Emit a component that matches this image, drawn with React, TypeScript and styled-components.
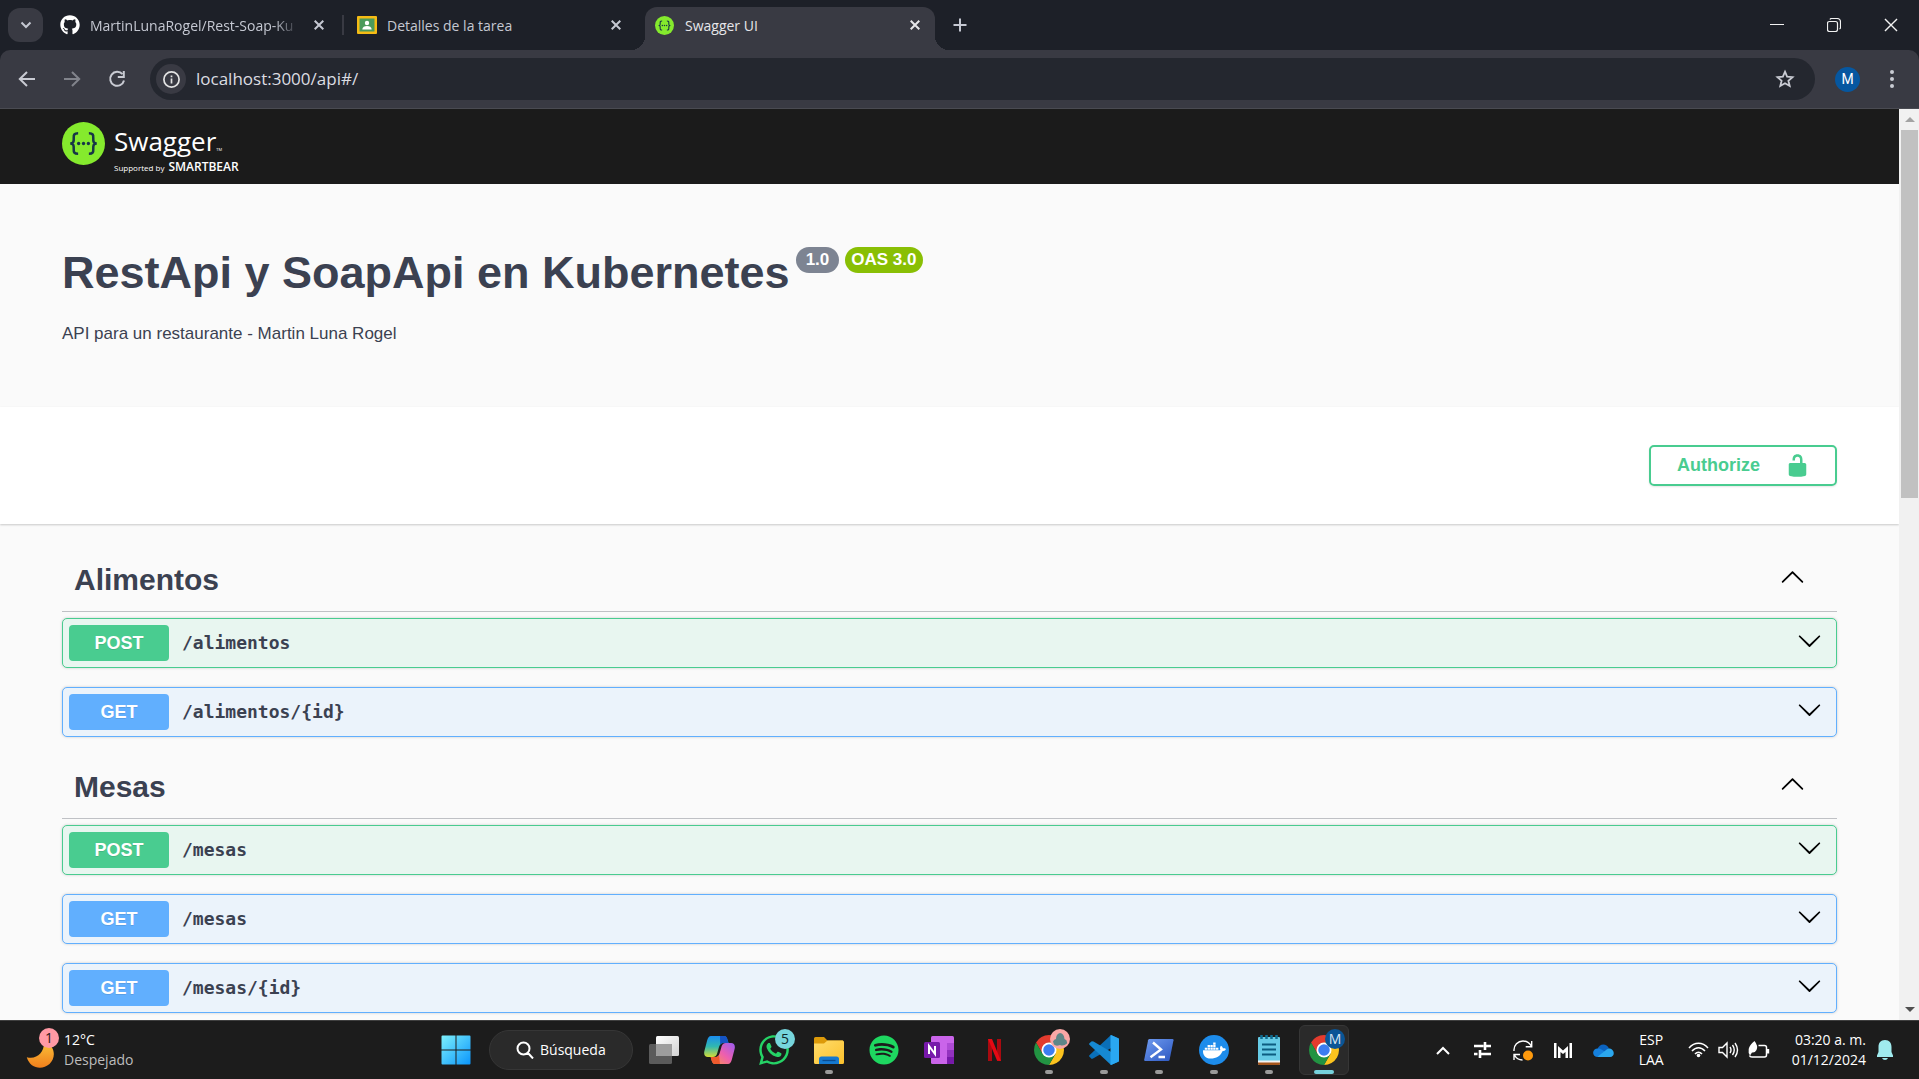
import React, { useState } from "react";
import styled, { createGlobalStyle } from "styled-components";
import { FaDocker, FaGithub, FaSpotify, FaWhatsapp } from "react-icons/fa";

const uiFont = `"Open Sans", "Noto Sans", sans-serif`;
const pageFont = `"Liberation Sans", Arial, sans-serif`;

const GlobalStyle = createGlobalStyle`
  *, *::before, *::after { box-sizing: border-box; }
  html, body, #root { height: 100%; margin: 0; }
  body { background: #1c1c1c; font-family: ${uiFont}; overflow: hidden; }
  button { border: 0; padding: 0; margin: 0; background: none; color: inherit; font: inherit; cursor: pointer; }
  svg { display: block; flex: none; }
  h2, h3, p { margin: 0; }
`;

const Screen = styled.div`
  display: flex;
  flex-direction: column;
  height: 100vh;
`;

/* ---------- Browser chrome ---------- */

const TabStrip = styled.div`
  display: flex;
  align-items: center;
  height: 50px;
  padding-left: 8px;
  background: #1d2028;
  color: #c5c8d2;
`;

const TabSearch = styled.button`
  display: grid;
  place-items: center;
  width: 35px;
  height: 34px;
  border-radius: 12px;
  background: #393a43;
`;

const TabList = styled.div`
  display: flex;
  align-self: stretch;
  padding-left: 4px;
`;

const Tab = styled.div<{ $active?: boolean }>`
  position: relative;
  display: flex;
  align-items: center;
  gap: ${(p) => (p.$active ? 11 : 10)}px;
  width: ${(p) => (p.$active ? 290 : 295)}px;
  margin: 7px 0 0 ${(p) => (p.$active ? 6 : 0)}px;
  padding: 0 ${(p) => (p.$active ? 10 : 13)}px 7px ${(p) => (p.$active ? 10 : 13)}px;
  border-radius: 12px 12px 0 0;
  background: ${(p) => (p.$active ? "#393a43" : "transparent")};
  color: ${(p) => (p.$active ? "#e6e6ea" : "#c5c8d2")};

  &::before,
  &::after {
    content: "";
    display: ${(p) => (p.$active ? "block" : "none")};
    position: absolute;
    bottom: 0;
    width: 14px;
    height: 14px;
  }
  &::before {
    right: 100%;
    background: radial-gradient(circle at 0 0, transparent 14px, #393a43 14px);
  }
  &::after {
    left: 100%;
    background: radial-gradient(circle at 100% 0, transparent 14px, #393a43 14px);
  }
`;

const TabTitle = styled.span<{ $faded?: boolean }>`
  flex: 1;
  min-width: 0;
  padding-top: 2px;
  overflow: hidden;
  white-space: nowrap;
  font-size: 14px;
  line-height: 20px;
  mask-image: ${(p) => (p.$faded ? "linear-gradient(90deg, #000 88%, transparent)" : "none")};
`;

const TabSeparator = styled.span`
  align-self: center;
  width: 2px;
  height: 20px;
  background: #393a43;
`;

const IconButton = styled.button<{ $size?: number }>`
  display: grid;
  place-items: center;
  flex: none;
  width: ${(p) => p.$size ?? 20}px;
  height: ${(p) => p.$size ?? 20}px;
`;

const NewTab = styled(IconButton)`
  margin-left: 10px;
`;

const WindowControls = styled.div`
  display: flex;
  margin-left: auto;
  color: #f2f2f2;
`;

const WindowButton = styled(IconButton)`
  width: 57px;
  height: 49px;
`;

const Toolbar = styled.div`
  display: flex;
  align-items: center;
  height: 59px;
  padding: 0 17px 0 12px;
  border-bottom: 1px solid #4a4b52;
  border-radius: 10px 10px 0 0;
  background: #393a43;
  color: #c9cbd3;
`;

const ToolbarBackdrop = styled.div`
  background: #1d2028;
`;

const NavButtons = styled.div`
  display: flex;
  gap: 15px;
  padding-right: 18px;
`;

const AddressBar = styled.div`
  display: flex;
  align-items: center;
  flex: 1;
  height: 42px;
  padding: 0 15px 0 6px;
  border-radius: 21px;
  background: #24272f;
`;

const SiteInfo = styled(IconButton)`
  border-radius: 50%;
  background: #393a43;
  color: #e3e3e3;
`;

const AddressInput = styled.input`
  flex: 1;
  min-width: 0;
  padding: 0;
  margin: 0 10px;
  border: 0;
  outline: 0;
  background: transparent;
  color: #dcdde2;
  font: 17px/24px ${uiFont};
`;

const Profile = styled.button`
  width: 25px;
  height: 25px;
  margin: 0 22px 0 20px;
  border-radius: 50%;
  background: #0657a0;
  color: #fff;
  font: 14px/25px Roboto, sans-serif;
`;

/* ---------- Page viewport ---------- */

const Viewport = styled.div`
  display: flex;
  flex: 1;
  min-height: 0;
  background: #fafafa;
`;

const Page = styled.main`
  flex: 1;
  min-width: 0;
  overflow: hidden;
  color: #3b4151;
  font-family: ${pageFont};
`;

const Wrapper = styled.div`
  max-width: 1825px;
  margin: 0 auto;
  padding: 0 25px;
`;

const TopBar = styled.header`
  background: #1b1b1b;
`;

const Brand = styled.a`
  display: flex;
  width: max-content;
  gap: 9px;
  height: 75px;
  padding-top: 13px;
  color: #fff;
  text-decoration: none;
  font-family: ${uiFont};
`;

const BrandText = styled.span`
  display: flex;
  flex-direction: column;
`;

const BrandName = styled.span`
  font-size: 26px;
  line-height: 39px;
`;

const Trademark = styled.sup`
  font-size: 4px;
  line-height: 4px;
  vertical-align: baseline;
`;

const BrandOwner = styled.span`
  display: flex;
  align-items: baseline;
  gap: 4px;
  font-size: 8px;
  line-height: 12px;
`;

const OwnerName = styled.strong`
  font-size: 12px;
  font-weight: 600;
`;

const Info = styled.section`
  padding: 62px 0;
`;

const TitleRow = styled.div`
  display: flex;
  align-items: flex-start;
`;

const Title = styled.h2`
  margin-right: 6px;
  font-size: 45px;
  line-height: 54px;
`;

const Pill = styled.span<{ $color: string; $pad: number }>`
  margin: 1px 6px 0 0;
  padding: 0 ${(p) => p.$pad}px;
  border-radius: 13px;
  background: ${(p) => p.$color};
  color: #fff;
  font-size: 17px;
  font-weight: 700;
  line-height: 26px;
  height: 26px;
`;

const Description = styled.p`
  margin-top: 23px;
  font-size: 17px;
  line-height: 22px;
`;

const SchemeBar = styled.section`
  padding: 38px 0;
  background: #fff;
  box-shadow: 0 1px 2px rgba(0, 0, 0, 0.2);
`;

const SchemeRow = styled(Wrapper)`
  display: flex;
  justify-content: flex-end;
`;

const Authorize = styled.button`
  display: flex;
  align-items: center;
  gap: 25px;
  height: 41px;
  padding: 0 25px 0 26px;
  border: 2px solid #49cc90;
  border-radius: 5px;
  box-shadow: 0 1px 2px rgba(0, 0, 0, 0.1);
  color: #49cc90;
  font-size: 18px;
  font-weight: 700;
`;

const TagList = styled(Wrapper)`
  padding-top: 25px;
`;

const TagSection = styled.section`
  margin-bottom: 19px;
`;

const TagHeading = styled.h3`
  border-bottom: 1px solid #bfc1c5;
  font-size: 30px;
`;

const TagToggle = styled.button`
  display: flex;
  align-items: center;
  justify-content: space-between;
  width: 100%;
  height: 62px;
  padding: 0 32px 0 12px;
  text-align: left;
  font-weight: 700;
`;

const ArrowBox = styled.span`
  padding-bottom: 5px;
  color: #000;
`;

const Operations = styled.div`
  display: flex;
  flex-direction: column;
  gap: 19px;
  padding-top: 6px;
`;

const methodColors = {
  POST: { solid: "#49cc90", tint: "#e8f6f0" },
  GET: { solid: "#61affe", tint: "#ebf3fb" },
};
type Method = keyof typeof methodColors;

const Operation = styled.button<{ $method: Method }>`
  display: flex;
  align-items: center;
  width: 100%;
  height: 50px;
  padding: 0 14px 0 6px;
  border: 1px solid ${(p) => methodColors[p.$method].solid};
  border-radius: 5px;
  background: ${(p) => methodColors[p.$method].tint};
  box-shadow: 0 0 3px rgba(0, 0, 0, 0.19);
  text-align: left;
`;

const MethodBadge = styled.span<{ $method: Method }>`
  width: 100px;
  height: 36px;
  border-radius: 4px;
  background: ${(p) => methodColors[p.$method].solid};
  color: #fff;
  text-align: center;
  text-shadow: 0 1px 0 rgba(0, 0, 0, 0.1);
  font-size: 18px;
  font-weight: 700;
  line-height: 36px;
`;

const Path = styled.span`
  flex: 1;
  padding-left: 13px;
  font: 700 18px/24px "DejaVu Sans Mono", monospace;
`;

const ScrollTrack = styled.div`
  display: flex;
  flex-direction: column;
  width: 20px;
  padding: 0 1px 0 2px;
  background: #f1f1f1;
`;

const ScrollBody = styled.div`
  flex: 1;
`;

const ScrollThumb = styled.div`
  height: 42.4%;
  background: #c1c1c1;
`;

const ScrollArrow = styled.span`
  display: grid;
  place-items: center;
  height: 21px;
`;

/* ---------- Taskbar ---------- */

const Taskbar = styled.footer`
  display: flex;
  align-items: center;
  height: 59px;
  border-top: 1px solid #3f3f3f;
  background: #1c1c1c;
  color: #fff;
  font-size: 14px;
  line-height: 20px;
`;

const Weather = styled.button`
  display: flex;
  align-items: center;
  flex: 1;
  gap: 5px;
  padding-left: 26px;
  text-align: left;
`;

const Dim = styled.span`
  color: #bdbdbd;
`;

const Stack = styled.span<{ $align?: string }>`
  display: flex;
  flex-direction: column;
  text-align: ${(p) => p.$align ?? "left"};
  white-space: nowrap;
`;

const Apps = styled.nav`
  display: flex;
  align-items: center;
  gap: 5px;
`;

const AppTile = styled.button<{ $active?: boolean }>`
  position: relative;
  display: grid;
  place-items: center;
  width: 50px;
  height: 50px;
  border: 1px solid ${(p) => (p.$active ? "#363636" : "transparent")};
  border-radius: 6px;
  background: ${(p) => (p.$active ? "#2a2a2a" : "transparent")};
`;

const RunMark = styled.span<{ $active?: boolean }>`
  position: absolute;
  bottom: 0;
  left: 50%;
  width: ${(p) => (p.$active ? 20 : 8)}px;
  height: 4px;
  border-radius: 2px;
  background: ${(p) => (p.$active ? "#76d1dc" : "#9a9a9a")};
  transform: translateX(-50%);
`;

const CountBadge = styled.span<{ $bg: string; $fg: string }>`
  position: absolute;
  top: 3px;
  right: 3px;
  display: grid;
  place-items: center;
  width: 20px;
  height: 20px;
  border-radius: 50%;
  background: ${(p) => p.$bg};
  color: ${(p) => p.$fg};
  font-size: 14px;
  line-height: 20px;
`;

const WeatherIcon = styled.span`
  position: relative;
  width: 33px;
  height: 44px;
  padding-top: 12px;

  ${CountBadge} {
    top: 0;
    right: 0;
  }
`;

const SearchBox = styled.button`
  display: flex;
  align-items: center;
  gap: 6px;
  width: 144px;
  height: 40px;
  padding-left: 26px;
  margin: 0 1px 0 3px;
  border: 1px solid #363636;
  border-radius: 20px;
  background: #2a2a2a;
  color: #fff;
`;

const Tray = styled.div`
  display: flex;
  align-items: center;
  justify-content: flex-end;
  flex: none;
  width: 570px;
  padding-right: 24px;
`;

const TrayIcons = styled.div`
  display: flex;
  align-items: center;
  gap: 20px;
`;

const TrayStatus = styled.button`
  display: flex;
  align-items: center;
  gap: 9px;
  margin: 0 22px 0 24px;
`;

const Language = styled.button`
  margin-left: 26px;
`;

const Bell = styled(IconButton)`
  margin-left: 9px;
`;

/* ---------- Icons ---------- */

const Cross = ({ size = 10, width = 2 }: { size?: number; width?: number }) => (
  <svg width={size} height={size} viewBox="0 0 10 10" stroke="currentColor" strokeWidth={width} fill="none">
    <path d="M.7.7 9.3 9.3M9.3.7.7 9.3" />
  </svg>
);

const SwaggerMark = ({ size }: { size: number }) => (
  <svg width={size} height={size} viewBox="0 0 44 44">
    <circle cx="22" cy="22" r="22" fill="#85ea2d" />
    <g fill="none" stroke="#173647" strokeWidth="2.6">
      <path d="M16.5 11.5c-4 0-4.700 1.300-4.500 5 .2 3.700-.3 5.500-3.600 5.500 3.300 0 3.800 1.800 3.600 5.500-.2 3.700.500 5 4.500 5" />
      <path d="M27.500 11.500c4 0 4.700 1.300 4.500 5-.2 3.700.3 5.500 3.600 5.500-3.300 0-3.800 1.800-3.600 5.500.2 3.700-.5 5-4.500 5" />
    </g>
    <g fill="#173647">
      <circle cx="17" cy="22" r="1.700" />
      <circle cx="22" cy="22" r="1.700" />
      <circle cx="27" cy="22" r="1.700" />
    </g>
  </svg>
);

const ClassroomIcon = () => (
  <svg width="20" height="20" viewBox="0 0 20 20">
    <rect y="1" width="20" height="18" rx="1" fill="#f5bb14" />
    <rect x="2.500" y="3.500" width="15" height="13" fill="#4b9a5b" />
    <circle cx="10" cy="8" r="2.200" fill="#fff" />
    <path d="M5.300 14.500c0-4.600 9.400-4.600 9.400 0z" fill="#fff" />
  </svg>
);

const Arrow = ({ flip }: { flip?: boolean }) => (
  <svg width="20" height="20" viewBox="0 0 20 20" fill="none" stroke="currentColor" strokeWidth="2">
    <path d={flip ? "M2 10h15M10 3l7.200 7-7.200 7" : "M18 10H3M10 3 2.800 10l7.200 7"} />
  </svg>
);

const ReloadIcon = () => (
  <svg width="20" height="20" viewBox="0 0 20 20" fill="none" stroke="currentColor" strokeWidth="2">
    <path d="M15.500 5.200A7 7 0 1 0 17 11.500" />
    <path d="M16.800 2v6h-6" />
  </svg>
);

const SectionArrow = ({ open }: { open?: boolean }) => (
  <svg width="25" height="25" viewBox="0 0 20 20" fill="currentColor">
    {open ? (
      <path d="M17.418 14.908c.272.268.709.268.979 0s.271-.701 0-.969l-7.908-7.830c-.27-.268-.707-.268-.979 0l-7.908 7.830c-.27.268-.27.701 0 .969.271.268.709.268.979 0L10 7.767z" transform="translate(0 -1)" />
    ) : (
      <path d="M17.418 6.109c.272-.268.709-.268.979 0s.271.701 0 .969l-7.908 7.830c-.27.268-.707.268-.979 0l-7.908-7.830c-.27-.268-.27-.701 0-.969.271-.268.709-.268.979 0L10 13.250z" />
    )}
  </svg>
);

const UnlockIcon = () => (
  <svg width="25" height="25" viewBox="0 0 20 20" fill="currentColor">
    <path d="M15.800 8H14V5.600C14 2.703 12.665 1 10 1 7.334 1 6 2.703 6 5.600V6h2v-.801C8 3.754 8.797 3 10 3c1.203 0 2 .754 2 2.199V8H4c-.553 0-1 .646-1 1.199V17c0 .549.428 1.139.951 1.307l1.197.387C5.672 18.861 6.550 19 7.100 19h5.800c.549 0 1.428-.139 1.951-.307l1.196-.387c.524-.167.953-.757.953-1.306V9.199C17 8.646 16.352 8 15.800 8z" />
  </svg>
);

const StartIcon = () => (
  <svg width="30" height="30" viewBox="0 0 30 30">
    <defs>
      <linearGradient id="start" x1="0" y1="0" x2="1" y2="1" gradientUnits="objectBoundingBox">
        <stop offset="0" stopColor="#7df0fb" />
        <stop offset="1" stopColor="#0a95fb" />
      </linearGradient>
    </defs>
    <path fill="url(#start)" d="M1.500.500H14.500V14.500H.500V1.500q0-1 1-1zM15.500.500H28.500q1 0 1 1V14.500h-14zM.500 15.500h14v14h-13q-1 0-1-1zM15.500 15.500h14v13q0 1-1 1h-13z" />
  </svg>
);

const TaskViewIcon = () => (
  <svg width="30" height="28" viewBox="0 0 30 28">
    <defs>
      <linearGradient id="tvFront" x1="0" y1="0" x2="1" y2="1">
        <stop offset="0" stopColor="#fff" />
        <stop offset="1" stopColor="#d2d2d2" />
      </linearGradient>
    </defs>
    <rect y="8" width="23" height="20" rx="1.500" fill="#5b5b5b" />
    <rect x="7" width="23" height="20" rx="1.500" fill="url(#tvFront)" />
    <path d="M7 8h16v12H8.500A1.500 1.500 0 0 1 7 18.500z" fill="#9d9d9d" />
  </svg>
);

const CopilotIcon = () => (
  <svg width="31" height="28" viewBox="0 0 31 28">
    <defs>
      <linearGradient id="cpA" x1="0" y1="0" x2="0" y2="1">
        <stop offset="0" stopColor="#1a8df0" />
        <stop offset=".5" stopColor="#31b8b0" />
        <stop offset="1" stopColor="#d4dc35" />
      </linearGradient>
      <linearGradient id="cpB" x1="1" y1="0" x2="0" y2="1">
        <stop offset="0" stopColor="#9a5cf2" />
        <stop offset=".5" stopColor="#ee5fae" />
        <stop offset="1" stopColor="#fb9a49" />
      </linearGradient>
    </defs>
    <path d="M7 0h13c2 0 3 2 3.500 4l1 3h-5c-3 0-4 2-4.800 5l-1.700 6c-.8 2-2 3-4 3H4c-3 0-4.500-2-3.600-6L3 5c.9-3.300 2-5 4-5z" fill="url(#cpA)" />
    <path d="M16 0h4.500c2 0 2.700 2 3.200 4l.9 3h-5c-1.500 0-2.600.5-3.400 2z" fill="#1554c4" />
    <path d="M24 28H11c-2 0-3-2-3.500-4l-.8-3h4.500c3 0 4-2 4.800-5l1.700-6c.8-2 2-3 4-3H27c3 0 4.500 2 3.600 6L28 23c-.9 3.300-2 5-4 5z" fill="url(#cpB)" />
    <path d="M16 28h-5c-2 0-3-2-3.500-4l-.8-3h4.500c2 0 3-.500 3.800-2z" fill="#ee5a2d" />
  </svg>
);

const FolderIcon = () => (
  <svg width="30" height="27" viewBox="0 0 30 27">
    <defs>
      <linearGradient id="folder" x1="0" y1="0" x2="1" y2="1">
        <stop offset="0" stopColor="#ffdc6b" />
        <stop offset="1" stopColor="#fcc12c" />
      </linearGradient>
    </defs>
    <path d="M0 1.500Q0 0 1.500 0h8.500l3.500 3.500H29V10H0z" fill="#dd9a09" />
    <path d="M0 6.500h10L13.500 3.500h15Q30 3.500 30 5v20.500q0 1.500-1.500 1.500h-27Q0 27 0 25.500z" fill="url(#folder)" />
    <path d="M5 27v-5q0-2.500 2.500-2.500h15Q25 19.500 25 22v5z" fill="#1679cf" />
    <path d="M8.500 23.500h13" stroke="#0a4c91" strokeWidth="1.300" />
  </svg>
);

const OneNoteIcon = () => (
  <svg width="30" height="28" viewBox="0 0 30 28">
    <rect x="7" width="23" height="28" rx="1.500" fill="#ca64ea" />
    <path d="M23 7h7v7h-7z" fill="#ae4bd5" />
    <path d="M23 14h7v7h-7z" fill="#9332bf" />
    <path d="M23 21h7v5.500q0 1.500-1.500 1.500H23z" fill="#7719aa" />
    <rect y="6" width="16" height="16" rx="1.500" fill="#7719aa" />
    <path d="M5 18V10l6 8v-8" fill="none" stroke="#fff" strokeWidth="2" />
  </svg>
);

const NetflixIcon = () => (
  <svg width="13" height="22" viewBox="0 0 13 22">
    <path d="M0 0h4v22l-4 .2zM9 0h4v22.200L9 22z" fill="#a90a10" />
    <path d="M0 0h4l9 22-4-.4z" fill="#e50914" />
  </svg>
);

const ChromeIcon = () => (
  <svg width="30" height="30" viewBox="0 0 48 48">
    <path d="M3.220 12A24 24 0 0 1 44.780 12H24L13.600 30z" fill="#e33b2e" />
    <path d="M44.780 12A24 24 0 0 1 24 48l10.390-18L24 12z" fill="#fcc31e" />
    <path d="M24 48A24 24 0 0 1 3.220 12L13.600 30h20.790z" fill="#229342" />
    <circle cx="24" cy="24" r="12" fill="#fff" />
    <circle cx="24" cy="24" r="9.200" fill="#3d7df0" />
  </svg>
);

const CodeIcon = () => (
  <svg width="30" height="30" viewBox="0 0 30 30">
    <path d="M22 0 29 3.300V9L4.500 23.300 2.800 24 .400 21.800q-.6-.8 0-1.500z" fill="#0a6fb8" />
    <path d="M.400 8.200 2.800 6.200 4.500 6.500 29 21v5.700L22 30 .400 9.800q-.6-.8 0-1.600z" fill="#1689d2" />
    <path d="M22 0l8 3.600v22.800L22 30q-.8-.3-.500-1.500V1.500Q21.200.300 22 0z" fill="#2aa8f2" />
  </svg>
);

const PowerShellIcon = () => (
  <svg width="30" height="22" viewBox="0 0 30 22">
    <defs>
      <linearGradient id="ps" x1="0" y1="0" x2="1" y2="1">
        <stop offset="0" stopColor="#6f9bf0" />
        <stop offset="1" stopColor="#2c57c0" />
      </linearGradient>
    </defs>
    <path d="M5.500 0H28.500q1.200 0 1 1.200L25.600 20.800q-.3 1.200-1.400 1.200H1.200q-1.200 0-1-1.200L4.100 1.200Q4.400 0 5.500 0z" fill="url(#ps)" />
    <path d="M9 3.500 17 10.500 6.500 18.300M14.500 18h6.500" fill="none" stroke="#fff" strokeWidth="2.400" />
  </svg>
);

const DockerDisc = styled.span`
  display: grid;
  place-items: center;
  width: 30px;
  height: 30px;
  border-radius: 50%;
  background: #1d8ceb;
`;

const NotepadIcon = () => (
  <svg width="22" height="30" viewBox="0 0 22 30">
    <rect y="2" width="22" height="28" rx="1" fill="#66cbe6" />
    <path d="M0 25.500h22V28H0z" fill="#f3f3f3" />
    <path d="M0 27.500h22V29q0 1-1 1H1q-1 0-1-1z" fill="#a4551c" />
    <path d="M4 9.500h14M4 14.500h14M4 19.500h14" stroke="#0c5d80" strokeWidth="2" />
    <path d="M3.500 0v4M8.500 0v4M13.500 0v4M18.500 0v4" stroke="#0f6d92" strokeWidth="2.500" />
  </svg>
);

const MoonIcon = () => (
  <svg width="28" height="28" viewBox="0 0 28 28">
    <defs>
      <linearGradient id="moon" x1="0" y1="0" x2="0" y2="1">
        <stop offset="0" stopColor="#fbc43a" />
        <stop offset="1" stopColor="#f07f1c" />
      </linearGradient>
    </defs>
    <path d="M18 1C30 6 30 18 23.500 24 16 30.500 4 28.500.800 17.200 11 20 19 12 18 1z" fill="url(#moon)" />
  </svg>
);

const SyncIcon = () => (
  <svg width="20" height="21" viewBox="0 0 20 21" fill="none" stroke="#fff" strokeWidth="1.400">
    <path d="M1 11C.500 5 5 1 10 1c4 0 7 2.500 8.500 5.500M18.700 1v5.700h-6M1 20v-5.500h6M1.500 15c1.500 3 4.500 5 8 5" />
    <circle cx="15" cy="15.500" r="5" fill="#ff9a0d" stroke="none" />
  </svg>
);

const Lines = ({ w, h, d, sw = 1.6 }: { w: number; h: number; d: string; sw?: number }) => (
  <svg width={w} height={h} viewBox={`0 0 ${w} ${h}`} fill="none" stroke="currentColor" strokeWidth={sw}>
    <path d={d} />
  </svg>
);

const CloudIcon = () => (
  <svg width="21" height="13" viewBox="0 0 21 13">
    <path d="M4.500 5C6-.500 13.500-1.500 16 4.500L11 9z" fill="#0b63c0" />
    <path d="M5 13C-1.500 13-1.500 4.500 5 4.500c3 0 5 2 7 3.500L8 13z" fill="#1580dd" />
    <path d="M4.500 12.700 14 5.200c1-.7 2-1 3-.7 5 1.500 5 8.500 0 8.500H6z" fill="#2ba7ee" />
  </svg>
);

/* ---------- Content ---------- */

const sections: { name: string; operations: [Method, string][] }[] = [
  { name: "Alimentos", operations: [["POST", "/alimentos"], ["GET", "/alimentos/{id}"]] },
  { name: "Mesas", operations: [["POST", "/mesas"], ["GET", "/mesas"], ["GET", "/mesas/{id}"]] },
];

function Tag({ name, operations }: (typeof sections)[number]) {
  const [open, setOpen] = useState(true);
  return (
    <TagSection>
      <TagHeading>
        <TagToggle aria-expanded={open} onClick={() => setOpen(!open)}>
          {name}
          <ArrowBox>
            <SectionArrow open={open} />
          </ArrowBox>
        </TagToggle>
      </TagHeading>
      {open && (
        <Operations>
          {operations.map(([method, path]) => (
            <Operation key={method + path} $method={method}>
              <MethodBadge $method={method}>{method}</MethodBadge>
              <Path>{path}</Path>
              <ArrowBox>
                <SectionArrow />
              </ArrowBox>
            </Operation>
          ))}
        </Operations>
      )}
    </TagSection>
  );
}

type App = { label: string; icon: React.ReactNode; running?: boolean; active?: boolean; badge?: React.ReactNode };

const apps: App[] = [
  { label: "Vista de tareas", icon: <TaskViewIcon /> },
  { label: "Copilot", icon: <CopilotIcon /> },
  {
    label: "WhatsApp",
    icon: <FaWhatsapp size={34} color="#25d366" />,
    badge: <CountBadge $bg="#76d5dc" $fg="#10282b">5</CountBadge>,
  },
  { label: "Explorador", icon: <FolderIcon />, running: true },
  { label: "Spotify", icon: <FaSpotify size={30} color="#1ed760" /> },
  { label: "OneNote", icon: <OneNoteIcon /> },
  { label: "Netflix", icon: <NetflixIcon /> },
  {
    label: "Chrome",
    icon: <ChromeIcon />,
    running: true,
    badge: (
      <CountBadge $bg="#f9a7a6" $fg="#5f8688">
        <svg width="16" height="14" viewBox="0 0 16 14" fill="currentColor">
          <path d="M1 9.500Q2 7 4 7q0-5 4-6 4 .500 4.500 6 3 1 2.500 4.500-3.500 3-7 1.500-4 1.500-6-.5z" />
        </svg>
      </CountBadge>
    ),
  },
  { label: "Visual Studio Code", icon: <CodeIcon />, running: true },
  { label: "PowerShell", icon: <PowerShellIcon />, running: true },
  { label: "Docker", icon: <DockerDisc><FaDocker size={23} color="#fff" /></DockerDisc>, running: true },
  { label: "Bloc de notas", icon: <NotepadIcon />, running: true },
  {
    label: "Chrome M",
    icon: <ChromeIcon />,
    running: true,
    active: true,
    badge: <CountBadge $bg="#0a5596" $fg="#d8e6f2">M</CountBadge>,
  },
];

export default function App() {
  return (
    <Screen>
      <GlobalStyle />
      <TabStrip>
        <TabSearch aria-label="Buscar pestañas">
          <Lines w={12} h={8} sw={2} d="M1.500 1.500 6 6l4.500-4.500" />
        </TabSearch>
        <TabList>
          <Tab>
            <FaGithub size={20} color="#fff" />
            <TabTitle $faded>MartinLunaRogel/Rest-Soap-Ku</TabTitle>
            <IconButton aria-label="Cerrar"><Cross /></IconButton>
          </Tab>
          <TabSeparator />
          <Tab>
            <ClassroomIcon />
            <TabTitle>Detalles de la tarea</TabTitle>
            <IconButton aria-label="Cerrar"><Cross /></IconButton>
          </Tab>
          <Tab $active>
            <SwaggerMark size={19} />
            <TabTitle>Swagger UI</TabTitle>
            <IconButton aria-label="Cerrar"><Cross /></IconButton>
          </Tab>
        </TabList>
        <NewTab $size={30} aria-label="Nueva pestaña">
          <Lines w={14} h={14} sw={2} d="M7 .500v13M.500 7h13" />
        </NewTab>
        <WindowControls>
          <WindowButton aria-label="Minimizar"><Lines w={14} h={2} sw={1} d="M0 .500h14" /></WindowButton>
          <WindowButton aria-label="Restaurar">
            <Lines w={14} h={14} sw={1.2} d="M2.500 3.500h6q2 0 2 2v6q0 2-2 2h-6q-2 0-2-2v-6q0-2 2-2zM3 1.500q.3-1 1.500-1H10q3.500 0 3.500 3.500v5.500q0 1.200-1 1.500" />
          </WindowButton>
          <WindowButton aria-label="Cerrar ventana"><Cross size={14} width={1} /></WindowButton>
        </WindowControls>
      </TabStrip>

      <ToolbarBackdrop>
        <Toolbar>
          <NavButtons>
            <IconButton $size={30} aria-label="Atrás"><Arrow /></IconButton>
            <IconButton $size={30} aria-label="Adelante" disabled style={{ opacity: 0.5 }}><Arrow flip /></IconButton>
            <IconButton $size={30} aria-label="Recargar"><ReloadIcon /></IconButton>
          </NavButtons>
          <AddressBar>
            <SiteInfo $size={30} aria-label="Información del sitio">
              <svg width="17" height="17" viewBox="0 0 17 17" fill="none" stroke="currentColor" strokeWidth="1.700">
                <circle cx="8.500" cy="8.500" r="7.600" />
                <path d="M8.500 7.500v5M8.500 4.500v1.700" />
              </svg>
            </SiteInfo>
            <AddressInput aria-label="Dirección" defaultValue="localhost:3000/api#/" />
            <IconButton $size={30} aria-label="Favorito">
              <svg width="20" height="20" viewBox="0 0 20 20" fill="none" stroke="currentColor" strokeWidth="1.800">
                <path d="m10 2.700 2.100 5 5.400.5-4.100 3.500 1.300 5.300L10 14.200 5.300 17l1.300-5.300L2.500 8.200l5.400-.5z" />
              </svg>
            </IconButton>
          </AddressBar>
          <Profile>M</Profile>
          <IconButton $size={20} aria-label="Menú">
            <svg width="4" height="18" viewBox="0 0 4 18" fill="currentColor">
              <circle cx="2" cy="2" r="2" />
              <circle cx="2" cy="9" r="2" />
              <circle cx="2" cy="16" r="2" />
            </svg>
          </IconButton>
        </Toolbar>
      </ToolbarBackdrop>

      <Viewport>
        <Page>
          <TopBar>
            <Wrapper>
              <Brand href="#/">
                <SwaggerMark size={43} />
                <BrandText>
                  <BrandName>Swagger<Trademark>TM</Trademark></BrandName>
                  <BrandOwner>Supported by <OwnerName>SMARTBEAR</OwnerName></BrandOwner>
                </BrandText>
              </Brand>
            </Wrapper>
          </TopBar>
          <Wrapper>
            <Info>
              <TitleRow>
                <Title>RestApi y SoapApi en Kubernetes</Title>
                <Pill $color="#7d8492" $pad={10}>1.0</Pill>
                <Pill $color="#89bf04" $pad={6}>OAS 3.0</Pill>
              </TitleRow>
              <Description>API para un restaurante - Martin Luna Rogel</Description>
            </Info>
          </Wrapper>
          <SchemeBar>
            <SchemeRow>
              <Authorize>
                Authorize
                <UnlockIcon />
              </Authorize>
            </SchemeRow>
          </SchemeBar>
          <TagList>
            {sections.map((section) => (
              <Tag key={section.name} {...section} />
            ))}
          </TagList>
        </Page>
        <ScrollTrack>
          <ScrollArrow><svg width="10" height="5" viewBox="0 0 10 5"><path d="M5 0l5 5H0z" fill="#a3a3a3" /></svg></ScrollArrow>
          <ScrollBody><ScrollThumb /></ScrollBody>
          <ScrollArrow><svg width="10" height="5" viewBox="0 0 10 5"><path d="M5 5l5-5H0z" fill="#505050" /></svg></ScrollArrow>
        </ScrollTrack>
      </Viewport>

      <Taskbar>
        <Weather>
          <WeatherIcon>
            <MoonIcon />
            <CountBadge $bg="#ff99a4" $fg="#2b1517">1</CountBadge>
          </WeatherIcon>
          <Stack>
            <span>12°C</span>
            <Dim>Despejado</Dim>
          </Stack>
        </Weather>
        <Apps>
          <AppTile aria-label="Inicio"><StartIcon /></AppTile>
          <SearchBox>
            <Lines w={18} h={18} sw={2} d="M13.500 7.500a6 6 0 1 1-12 0 6 6 0 0 1 12 0zM12 12l5 5.500" />
            Búsqueda
          </SearchBox>
          {apps.map((app) => (
            <AppTile key={app.label} aria-label={app.label} $active={app.active}>
              {app.icon}
              {app.badge}
              {app.running && <RunMark $active={app.active} />}
            </AppTile>
          ))}
        </Apps>
        <Tray>
          <TrayIcons>
            <IconButton aria-label="Iconos ocultos"><Lines w={14} h={9} sw={2} d="M1 8l6-6 6 6" /></IconButton>
            <IconButton aria-label="Ajustes">
              <Lines w={17} h={16} sw={2.6} d="M0 4h9.500M12 4h5M11 0v8M0 12h3.500M6.500 12H17M6 8v8" />
            </IconButton>
            <IconButton aria-label="Actualización"><SyncIcon /></IconButton>
            <IconButton aria-label="Monitor">
              <svg width="18" height="15" viewBox="0 0 18 15" fill="#fff">
                <path d="M0 0h2.500v15H0zM15.500 0H18v15h-2.500zM4 3l5 4.500L14 3v12h-2.500V9L9 11 6.500 9v6H4z" />
              </svg>
            </IconButton>
            <IconButton aria-label="OneDrive"><CloudIcon /></IconButton>
          </TrayIcons>
          <Language>
            <Stack $align="center">
              <span>ESP</span>
              <span>LAA</span>
            </Stack>
          </Language>
          <TrayStatus aria-label="Red, sonido y batería">
            <svg width="21" height="16" viewBox="0 0 21 16" fill="none" stroke="#fff" strokeWidth="1.500">
              <path d="M1 6c5.500-6.300 13.500-6.300 19 0M4 9c4-4.500 9-4.500 13 0M7 12c2.200-2.500 4.800-2.500 7 0" />
              <circle cx="10.500" cy="13.500" r="1.800" fill="#fff" stroke="none" />
            </svg>
            <Lines w={21} h={18} sw={1.4} d="M1 6.500h3.500L9 2v14L4.500 11.500H1zM12 6q2 3 0 6M14.500 4q3.500 5 0 10M17 2q5 7 0 14" />
            <svg width="22" height="18" viewBox="0 0 22 18" fill="none" stroke="#fff" strokeWidth="1.500">
              <path d="M10.500 4.500h6q2 0 2 2V14q0 2-2 2H4q-2 0-2.500-1.500" />
              <path d="M20 8v4.500" strokeWidth="2.400" />
              <path d="M6.500 0q4 5 2 9-1.500 3-4.500 2.500L2 14.500Q0 12 .700 8 1.500 4 6.500 0z" fill="#fff" stroke="none" />
            </svg>
          </TrayStatus>
          <Stack $align="right">
            <span>03:20 a. m.</span>
            <span>01/12/2024</span>
          </Stack>
          <Bell aria-label="Notificaciones">
            <svg width="16" height="20" viewBox="0 0 16 20" fill="#a0ebee">
              <path d="M8 0c4.500 0 6.500 3 6.500 7v5L16 15.500V17H0v-1.500L1.500 12V7c0-4 2-7 6.500-7zM5 18h6q-.8 2-3 2t-3-2z" />
            </svg>
          </Bell>
        </Tray>
      </Taskbar>
    </Screen>
  );
}
